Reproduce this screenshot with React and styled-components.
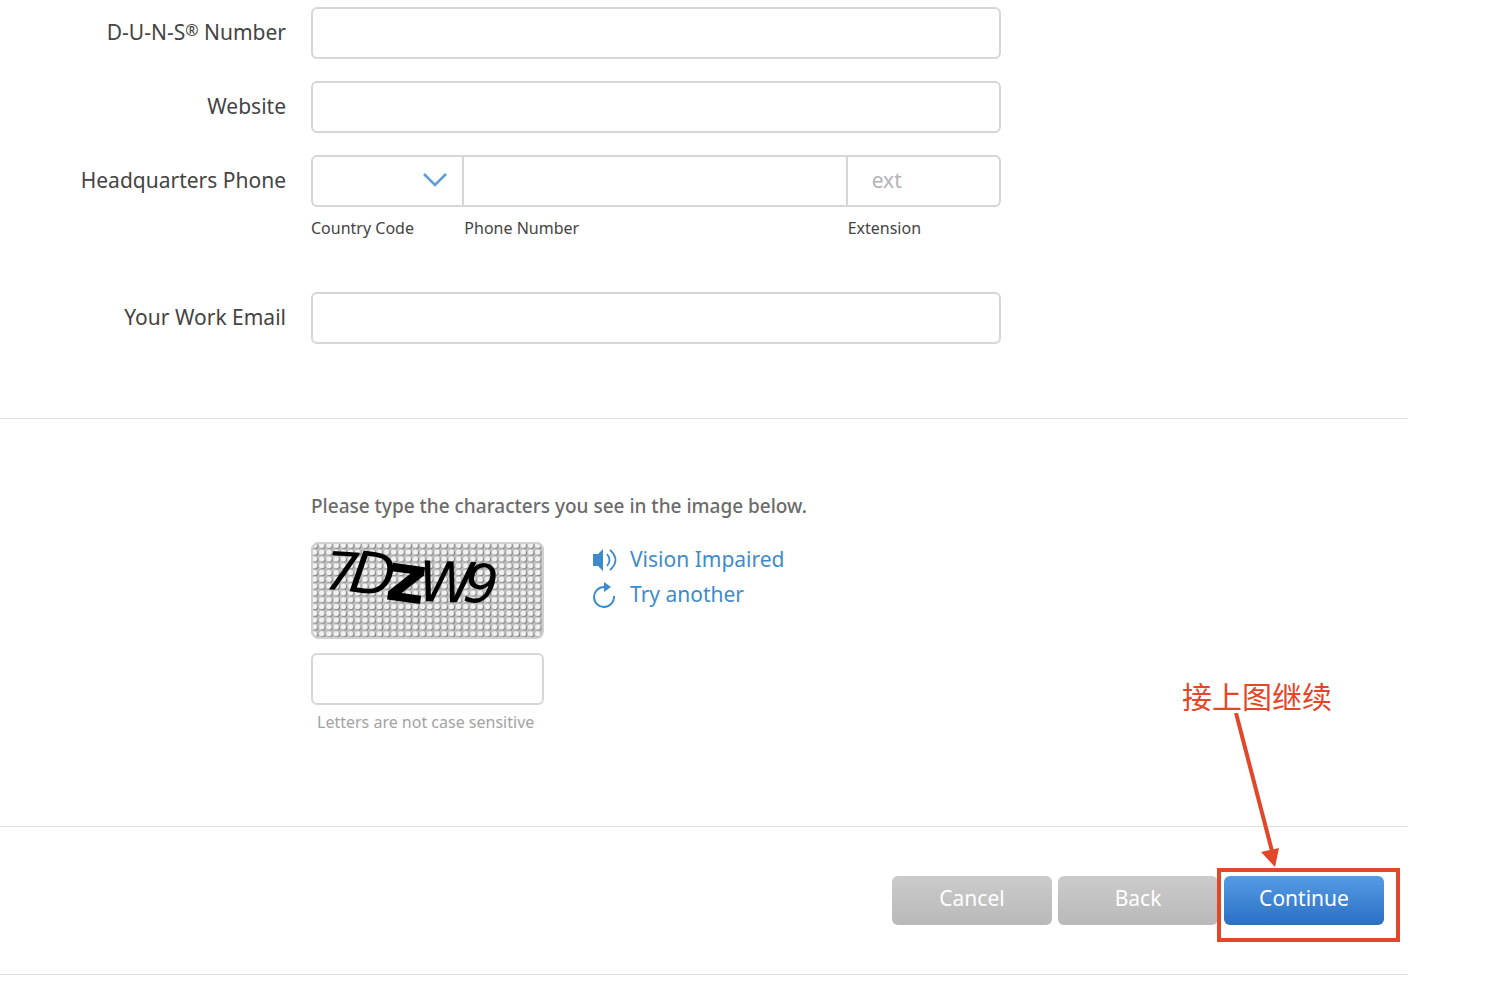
import React, { useState } from 'react';
import styled, { createGlobalStyle, css } from 'styled-components';

const GlobalStyle = createGlobalStyle`
    * {
        box-sizing: border-box;
    }

    body {
        margin: 0;
        background-color: #FFF;
        color: #444;
        font-family: "Noto Sans", "Open Sans", "Noto Sans CJK SC", sans-serif;
    }

    input, select, button {
        font-family: inherit;
    }
`

const Page = styled.form`
    padding-right: 92px;
    overflow: hidden;
`

const Section = styled.section`
    border-bottom: 1px solid #DDD;
`

const CompanySection = styled(Section)`
    display: flex;
    flex-direction: column;
    gap: 22px;
    padding: 7px 0 74px;
`

const CaptchaSection = styled(Section)`
    padding: 73px 0 92px 311px;
`

const ActionsSection = styled(Section)`
    display: flex;
    justify-content: flex-end;
    gap: 6px;
    padding: 49px 24px 49px 0;
`

const Row = styled.div`
    display: grid;
    grid-template-columns: 286px minmax(0, 690px);
    column-gap: 25px;
    align-items: start;
`

const labelStyle = css`
    font-size: 21px;
    line-height: 50px;
    text-align: right;
    white-space: nowrap;
`

const Label = styled.label`
    ${labelStyle}
`

const GroupLabel = styled.span`
    ${labelStyle}
`

const Registered = styled.sup`
    font-size: 16px;
    line-height: 0;
    vertical-align: 4px;
`

const Field = styled.input`
    display: block;
    width: 100%;
    height: 52px;
    padding: 0 24px 2px;
    border: 2px solid #D6D6D6;
    border-radius: 6px;
    background-color: #FFF;
    color: #444;
    font-size: 21px;

    &::placeholder {
        color: #B4B4B4;
    }
`

const PhoneFields = styled.div`
    display: grid;
    grid-template-columns: 2fr 5fr 2fr;
    padding-bottom: 30px;
`

const PhonePart = styled.div`
    position: relative;
    min-width: 0;

    &:not(:first-child) > input {
        border-left: 0;
        border-top-left-radius: 0;
        border-bottom-left-radius: 0;
    }

    &:not(:last-child) > input,
    &:not(:last-child) > select {
        border-top-right-radius: 0;
        border-bottom-right-radius: 0;
    }
`

const CountrySelect = styled(Field).attrs({ as: 'select' })`
    appearance: none;
`

const Chevron = styled.svg`
    position: absolute;
    top: 18px;
    right: 16px;
    pointer-events: none;
`

const Caption = styled.label`
    display: block;
    padding-top: 9px;
    font-size: 16px;
    line-height: 24px;
    white-space: nowrap;
`

const CaptchaTitle = styled.label`
    display: block;
    color: #6B6B6B;
    font-size: 19px;
    font-weight: 500;
    line-height: 28px;
`

const CaptchaBody = styled.div`
    display: flex;
    gap: 48px;
    padding-top: 22px;
`

const CaptchaColumn = styled.div`
    width: 233px;
`

const CaptchaImage = styled.svg`
    display: block;
    width: 100%;
    margin-bottom: 14px;
    overflow: visible;
`

const Hint = styled.p`
    margin: 0;
    padding: 5px 0 0 6px;
    color: #A3A3A3;
    font-size: 16px;
    line-height: 24px;
    white-space: nowrap;
`

const CaptchaLinks = styled.div`
    display: flex;
    flex-direction: column;
`

const CaptchaLink = styled.a`
    display: flex;
    align-items: center;
    gap: 12px;
    color: #3E8BCB;
    font-size: 21px;
    line-height: 35px;
    text-decoration: none;
`

const Button = styled.button`
    width: 160px;
    height: 49px;
    padding: 0 0 6px;
    border: 0;
    border-radius: 6px;
    background-image: ${({ $primary }) => $primary
        ? 'linear-gradient(#559CE5, #2A6FC4)'
        : 'linear-gradient(#CBCBCB, #B9B9B9)'};
    color: #FFF;
    font-size: 21px;
`

const Highlighted = styled.div`
    position: relative;
`

const HighlightFrame = styled.div`
    position: absolute;
    inset: -8px -16px -17px -7px;
    border: 4px solid #E3472A;
    pointer-events: none;
`

const Note = styled.div`
    position: absolute;
    bottom: 58px;
    left: -42px;
    color: #E3472A;
    font-family: "Noto Sans CJK SC", sans-serif;
    font-size: 30px;
    line-height: 36px;
    white-space: nowrap;
    pointer-events: none;
`

const NoteArrow = styled.svg`
    display: block;
    margin-left: 48px;
`

function SpeakerIcon() {
    return (
        <svg width="26" height="26" viewBox="0 0 26 26" aria-hidden="true">
            <path d="M1 7h5l5-5v22l-5-5H1z" fill="#3E8BCB"/>
            <path d="M15 7q5 6 0 12M18 3q11 10 0 20" fill="none" stroke="#3E8BCB" strokeWidth="1.8"/>
        </svg>
    )
}

function ReloadIcon() {
    return (
        <svg width="26" height="26" viewBox="0 0 26 26" aria-hidden="true">
            <path d="M14 5h-2a10 10 0 1 0 10 9" fill="none" stroke="#3E8BCB" strokeWidth="2"/>
            <path d="M12 0l7 5-7 5z" fill="#3E8BCB"/>
        </svg>
    )
}

const captchaLetters = [
    { char: '7', x: 13, y: 47, size: 53, angle: 4, weight: 400, style: 'italic' },
    { char: 'D', x: 37, y: 49, size: 58, angle: 8, weight: 400, style: 'italic' },
    { char: 'z', x: 73, y: 57, size: 68, angle: 8, weight: 700, style: 'normal' },
    { char: 'W', x: 107, y: 59, size: 56, angle: 2, weight: 400, style: 'italic' },
    { char: '9', x: 151, y: 59, size: 54, angle: 6, weight: 400, style: 'italic' },
]

function Captcha() {
    return (
        <CaptchaImage viewBox="0 0 233 97" role="img" aria-label="Captcha">
            <defs>
                <pattern id="dots" width="7.2" height="6.8" patternUnits="userSpaceOnUse">
                    <rect width="7.2" height="6.8" fill="#BDBDBD"/>
                    <ellipse cx="4.3" cy="4.1" rx="3" ry="2.8" fill="#7E7E7E"/>
                    <circle cx="3.6" cy="3.4" r="2.7" fill="#F1F1F1"/>
                </pattern>
            </defs>
            <rect width="233" height="97" rx="8" fill="url(#dots)"/>
            <rect x="1" y="1" width="231" height="95" rx="7" fill="none" stroke="#D0D0D0" strokeWidth="2"/>
            {captchaLetters.map((item) => (
                <text
                    key={item.char}
                    x={item.x}
                    y={item.y}
                    fontFamily="DejaVu Sans, sans-serif"
                    fontStyle={item.style}
                    fontSize={item.size}
                    fontWeight={item.weight}
                    transform={`rotate(${item.angle} ${item.x} ${item.y})`}
                >
                    {item.char}
                </text>
            ))}
        </CaptchaImage>
    )
}

function App() {
    const [values, setValues] = useState({});

    const bind = (name) => ({
        id: name,
        name,
        value: values[name] || "",
        onChange: (event) => setValues({ ...values, [name]: event.target.value }),
    })

    return (
        <>
            <GlobalStyle/>
            <Page onSubmit={(event) => event.preventDefault()}>
                <CompanySection>
                    <Row>
                        <Label htmlFor="duns">D-U-N-S<Registered>®</Registered> Number</Label>
                        <Field {...bind('duns')}/>
                    </Row>
                    <Row>
                        <Label htmlFor="website">Website</Label>
                        <Field {...bind('website')}/>
                    </Row>
                    <Row role="group" aria-labelledby="phone-group">
                        <GroupLabel id="phone-group">Headquarters Phone</GroupLabel>
                        <PhoneFields>
                            <PhonePart>
                                <CountrySelect {...bind('country')}>
                                    <option value=""></option>
                                </CountrySelect>
                                <Chevron width="26" height="16" viewBox="0 0 26 16" aria-hidden="true">
                                    <path d="M2 1l11 11L24 1" fill="none" stroke="#5B9FD6" strokeWidth="2.6"/>
                                </Chevron>
                                <Caption htmlFor="country">Country Code</Caption>
                            </PhonePart>
                            <PhonePart>
                                <Field type="tel" {...bind('phone')}/>
                                <Caption htmlFor="phone">Phone Number</Caption>
                            </PhonePart>
                            <PhonePart>
                                <Field placeholder="ext" {...bind('extension')}/>
                                <Caption htmlFor="extension">Extension</Caption>
                            </PhonePart>
                        </PhoneFields>
                    </Row>
                    <Row>
                        <Label htmlFor="email">Your Work Email</Label>
                        <Field type="email" {...bind('email')}/>
                    </Row>
                </CompanySection>

                <CaptchaSection>
                    <CaptchaTitle htmlFor="captcha">Please type the characters you see in the image below.</CaptchaTitle>
                    <CaptchaBody>
                        <CaptchaColumn>
                            <Captcha/>
                            <Field {...bind('captcha')}/>
                            <Hint>Letters are not case sensitive</Hint>
                        </CaptchaColumn>
                        <CaptchaLinks>
                            <CaptchaLink href="#audio"><SpeakerIcon/>Vision Impaired</CaptchaLink>
                            <CaptchaLink href="#reload"><ReloadIcon/>Try another</CaptchaLink>
                        </CaptchaLinks>
                    </CaptchaBody>
                </CaptchaSection>

                <ActionsSection>
                    <Button type="button">Cancel</Button>
                    <Button type="button">Back</Button>
                    <Highlighted>
                        <Button type="submit" $primary>Continue</Button>
                        <HighlightFrame/>
                        <Note>
                            接上图继续
                            <NoteArrow width="50" height="154" viewBox="0 0 50 154" aria-hidden="true">
                                <path d="M6 0L42 138" stroke="#E3472A" strokeWidth="4"/>
                                <path d="M31 139l18-4-4 19z" fill="#E3472A"/>
                            </NoteArrow>
                        </Note>
                    </Highlighted>
                </ActionsSection>
            </Page>
        </>
    )
}

export default App
